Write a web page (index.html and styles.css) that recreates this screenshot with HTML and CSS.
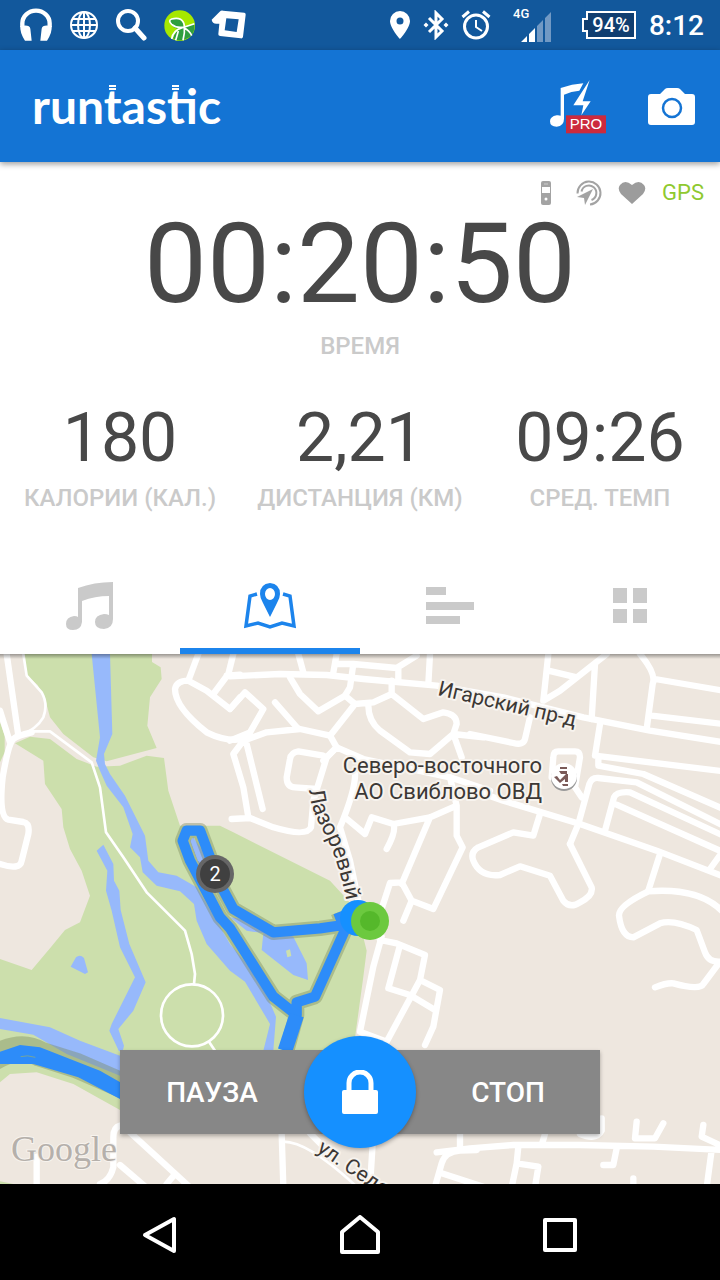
FILE: index.html
```html
<!DOCTYPE html>
<html lang="ru">
    <head>
        <meta charset="UTF-8">
        <meta name="viewport" content="width=device-width, initial-scale=1.0">
        <title>runtastic</title>
        <link rel="stylesheet" href="styles.css">
    </head>
    <body>
        <div class="status">
            <div class="status-left">
                <svg width="34" height="34" viewBox="0 0 102 102" aria-hidden="true">
                    <path d="M10 58V46a41 38 0 0 1 82 0v12" fill="none" stroke="#fff" stroke-width="13"/>
                    <path d="M4 54q28-6 30 8l4 36H18q-16-24-14-44zM98 54q-28-6-30 8l-4 36h20q16-24 14-44z" fill="#fff"/>
                </svg>
                <svg width="30" height="30" viewBox="0 0 30 30" fill="none" stroke="#fff" stroke-width="2" aria-hidden="true">
                    <circle cx="15" cy="15" r="13"/>
                    <ellipse cx="15" cy="15" rx="6" ry="13"/>
                    <path d="M15 2v26M2 15h26M4 9h22M4 21h22"/>
                </svg>
                <svg width="32" height="32" viewBox="0 0 32 32" fill="none" stroke="#fff" aria-hidden="true">
                    <circle cx="13" cy="12" r="10" stroke-width="4"/>
                    <path d="M20 19l9 10" stroke-width="5" stroke-linecap="round"/>
                </svg>
                <svg width="32" height="32" viewBox="0 0 96 96" aria-hidden="true">
                    <circle cx="50" cy="50" r="46" fill="#a6e800"/>
                    <path d="M20 34q10-10 28-4 14 8 14 24l32-8q2 26-14 38-30 18-50 4 8-24 24-28-30 0-34-26z" fill="#2f9e3f"/>
                    <path d="M62 54Q40 58 26 46 14 34 26 30q34-8 38 20 2 22-4 44M26 90q4-26 32-34l36-12M62 56q18 8 24 24M46 66l-8 28" fill="none" stroke="#fff" stroke-width="5"/>
                </svg>
                <svg width="36" height="32" viewBox="0 0 108 96" aria-hidden="true">
                    <path fill="#fff" fill-rule="evenodd" d="M2 32L26 8q4-4 10-3l64 6q5 1 4 6l-8 66q-1 6-7 5l-62-7q-6-1-5-6l3-31H16q-12 0-14-12zM46 28l-5 36 36 5 6-38z"/>
                </svg>
            </div>
            <div class="status-right">
                <svg width="22" height="30" viewBox="0 0 22 30" aria-hidden="true">
                    <path fill="#fff" fill-rule="evenodd" d="M11 1a10 10 0 0 1 10 10c0 7-10 18-10 18S1 18 1 11A10 10 0 0 1 11 1zm0 6.500a3.500 3.500 0 1 0 0 7 3.500 3.500 0 0 0 0-7z"/>
                </svg>
                <svg width="26" height="30" viewBox="0 0 26 30" aria-hidden="true">
                    <path d="M6 8l13 13-6 6V3l6 6L6 22" fill="none" stroke="#fff" stroke-width="3"/>
                    <path d="M3 12.500l2.500 2.500L3 17.500.500 15zM23 12.500l2.500 2.500-2.500 2.500-2.500-2.500z" fill="#fff"/>
                </svg>
                <svg width="30" height="30" viewBox="0 0 30 30" fill="none" stroke="#fff" aria-hidden="true">
                    <circle cx="15" cy="16.500" r="11.500" stroke-width="3"/>
                    <path d="M15 10v7l6 4" stroke-width="2"/>
                    <path d="M1.500 7L8 1.500M22 1.500L28.500 7" stroke-width="3"/>
                </svg>
                <svg class="signal" width="40" height="38" viewBox="0 0 40 38" aria-hidden="true">
                    <text x="0" y="12" class="net">4G</text>
                    <path fill="#fff" d="M8 36l6-6v6zM16 28l6-6v14h-6z"/>
                    <path fill="#7199c4" d="M24 20l6-6v22h-6zM32 12l6-6v30h-6z"/>
                </svg>
                <div class="battery">
                    <svg width="56" height="30" viewBox="0 0 56 30" aria-hidden="true">
                        <path fill="#103e70" stroke="#fff" stroke-width="2" d="M6 2h48v26H6v-7H2V9h4z"/>
                        <text x="30" y="22" text-anchor="middle">94%</text>
                    </svg>
                </div>
                <span class="clock">8:12</span>
            </div>
        </div>

        <header class="header">
            <div class="logo">run<span class="t">t</span>as<span class="t">t</span>ic</div>
            <button class="icon-button" aria-label="Музыка PRO">
                <svg width="58" height="56" viewBox="0 0 174 168" aria-hidden="true">
                    <path fill="#fff" d="M32 30q34-12 68-14L88 38q-24 2-46 12v72q0 22-22 24-20 0-20-16 0-14 20-18 6-1 12 1zM119 6L98 70h24l-28 42 6-30H70z"/>
                    <rect x="48" y="112" width="120" height="54" fill="#cc2a3d"/>
                    <text x="108" y="154" text-anchor="middle" class="pro">PRO</text>
                </svg>
            </button>
            <button class="icon-button" aria-label="Камера">
                <svg width="48" height="40" viewBox="0 0 48 40" aria-hidden="true">
                    <path fill="#fff" d="M3 8h9l5-5q1-1 3-1h9q2 0 3 1l5 5h7q3 0 3 3v25q0 3-3 3H3q-3 0-3-3V11q0-3 3-3z"/>
                    <circle cx="24" cy="22" r="9" fill="#fff" stroke="#1474d4" stroke-width="2.500"/>
                </svg>
            </button>
        </header>

        <section class="metrics">
            <div class="sensors">
                <svg width="12" height="26" viewBox="0 0 12 26" aria-hidden="true">
                    <rect x="1" y="1" width="10" height="24" rx="2" fill="#a3a3a3"/>
                    <path fill="#fff" d="M2 7h8v6H2z"/>
                    <circle cx="6" cy="19" r="1.500" fill="#fff"/>
                    <path d="M4 4h4" stroke="#ccc"/>
                </svg>
                <svg width="26" height="26" viewBox="0 0 26 26" fill="none" stroke="#a3a3a3" stroke-width="2" aria-hidden="true">
                    <path d="M1.500 13.500A11.500 11.500 0 1 1 14 24.500"/>
                    <path d="M5.500 11.500A7.500 7.500 0 1 1 15.500 20"/>
                    <path fill="#a3a3a3" stroke="none" d="M17 9L9 25l-1-7-7-1z"/>
                </svg>
                <svg width="28" height="24" viewBox="0 0 28 24" aria-hidden="true">
                    <path fill="#9c9c9c" d="M14 23L3 13Q-1 8 2 4q5-6 12 0 7-6 12 0 3 4-1 9z"/>
                </svg>
                <span class="gps">GPS</span>
            </div>
            <div class="timer">00:20:50</div>
            <div class="label">ВРЕМЯ</div>
            <div class="stats">
                <div>
                    <div class="value">180</div>
                    <div class="label">КАЛОРИИ (КАЛ.)</div>
                </div>
                <div>
                    <div class="value">2,21</div>
                    <div class="label">ДИСТАНЦИЯ (КМ)</div>
                </div>
                <div>
                    <div class="value">09:26</div>
                    <div class="label">СРЕД. ТЕМП</div>
                </div>
            </div>
        </section>

        <nav class="tabs">
            <button aria-label="Музыка">
                <svg width="48" height="50" viewBox="0 0 48 50" aria-hidden="true">
                    <path fill="#cacaca" d="M12 7q16-6 35-6v37q0 9-9 10-9 0-9-7 0-7 9-8 3 0 5 1V15q-14 0-27 5v21q-1 8-9 8-7 0-7-6 0-7 8-8 3 0 4 1z"/>
                </svg>
            </button>
            <button class="active" aria-label="Карта">
                <svg width="54" height="48" viewBox="0 0 54 48" aria-hidden="true">
                    <path fill="none" stroke="#1c84ec" stroke-width="3.500" d="M14 12L7 14 3 44l12-3 12 4 12-4 12 3-4-30-7-2"/>
                    <path fill="#1c84ec" fill-rule="evenodd" d="M27 1q10 1 10 11 0 4-3 9l-7 14-7-14q-3-5-3-9Q17 2 27 1zm0 5a5 6 0 1 0 0 12 5 6 0 0 0 0-12z"/>
                </svg>
            </button>
            <button aria-label="Сплиты">
                <svg width="48" height="38" viewBox="0 0 48 38" aria-hidden="true">
                    <path fill="#cacaca" d="M0 0h20v8H0zM0 15h48v8H0zM0 29h34v8H0z"/>
                </svg>
            </button>
            <button aria-label="Ещё">
                <svg width="36" height="36" viewBox="0 0 36 36" aria-hidden="true">
                    <path fill="#cacaca" d="M1 0h14v15H1zM21 0h14v15H21zM1 21h14v14H1zM21 21h14v14H21z"/>
                </svg>
            </button>
        </nav>

        <main class="map">
            <svg class="map-canvas" viewBox="0 0 720 530" preserveAspectRatio="xMidYMid slice">
                <g transform="scale(.33333)">
                    <!-- parks -->
                    <g fill="#ccdfac">
                        <path d="M72 0L82 65 112 92 134 130 150 190 190 240 280 310 320 322 470 282 442 215 450 130 485 75 482 40 456 24V0z"/>
                        <path d="M45 268L90 248 150 255 230 315 290 338 360 335 440 305 492 312 505 410 540 515 660 515 700 535 990 680 1045 740 1085 830 1100 890 1090 968 1060 1188V1300H360V1368L220 1290 110 1255 30 1260 0 1285V915L95 948 150 883 195 828 240 805 270 725 245 650 210 585 190 520 185 465 135 390 130 320z"/>
                        <path d="M0 205l14 40v50L0 325zM0 1582l40 8H0z"/>
                    </g>
                    <!-- water -->
                    <g fill="#97b9fb">
                        <path d="M275 0H330L337 240 312 300 315 330 330 360 375 425 435 545 445 620 475 655 530 665 590 700 650 800 690 870 740 930 790 1000 828 1088 820 1190H790L810 1110 735 983 690 950 620 870 590 800 582 750 540 712 470 695 428 655 420 610 390 580 398 540 370 460 320 395 300 350 288 320 300 250z"/>
                        <path d="M290 590L310 572 340 630 342 680 358 710 362 768 388 870 437 985 400 1070 355 1125 372 1175 368 1192H357L328 1130 335 1110 405 970 360 880 335 770 318 710 322 650z"/>
                        <path d="M212 938L228 910Q240 900 252 912L264 955 255 960z"/>
                        <path d="M0 1092L150 1120 240 1160 360 1205V1265L200 1200 100 1142 0 1125z"/>
                        <path d="M570 560L580 550 640 640 600 640zM690 790L760 800 880 848 920 928 924 978 880 963 785 888 790 838 740 830z"/>
                    </g>
                    <path fill="#ccdfac" d="M858 890l12-4 4 20-12 4z"/>
                    <!-- footpaths -->
                    <g class="road thin">
                        <path d="M45 245L95 232H150L275 325 300 400 318 535 370 610 440 715 555 830 575 900 585 960 582 990M628 1165L645 1190"/>
                        <circle cx="576" cy="1084" r="93"/>
                        <path d="M70 0L80 65 125 115Q145 150 130 190 110 225 60 245"/>
                    </g>
                    <!-- roads -->
                    <g class="road">
                        <path d="M20 0L55 245M0 170L30 265M95 235Q50 245 40 255 25 270 8 370 -5 490 25 497L70 504Q90 508 85 540L65 620Q60 650 0 630"/>
                        <path d="M595 0L565 80Q530 80 525 105 525 160 620 235 690 270 750 250M700 0L685 60 640 120M680 65L720 62M565 80L620 110 690 165 720 130"/>
                        <path d="M110 1508V1600M360 1415Q340 1420 340 1450V1540Q330 1580 300 1590M390 1435L570 1600M360 1533L450 1610M500 1590L525 1560"/>
                    </g>
                    <g class="road" transform="translate(690 0)">
                        <path d="M0 67L150 60 290 63 400 75 620 95 820 130 1060 190 1260 230 1480 265"/>
                        <path d="M205 0L220 55M180 70L210 120 265 172 345 125 360 100 370 30 500 42 560 5M320 0L310 55M320 30H370M505 42V75M600 0L595 90"/>
                        <path d="M345 125L375 150 430 145 485 120V80M375 150L300 245 320 280 280 320M415 155Q415 200 450 230L540 295 600 300 670 240 695 310M485 120L580 195 640 175Q680 180 680 210L670 240 760 250"/>
                        <path d="M0 165L45 115 100 165 60 235 0 260M135 145L205 225M300 245L210 225 110 235 40 260 10 300 40 400 55 490M50 270L98 465M5 495L60 492 130 520Q230 550 243 520L250 440 290 310 320 280 400 315 660 370 780 410"/>
                        <path d="M280 305L205 292Q183 295 180 315L170 370Q170 400 195 400L260 405M375 350Q380 400 330 520L360 620 385 740 450 855M345 490L405 540 425 490 490 510Q500 530 470 585M490 510L600 490 680 455 660 370M680 455V545L698 580 610 765 545 740 515 685 480 687 450 780M600 490L515 690M545 740L520 800"/>
                    </g>
                    <g class="road" transform="translate(1410 0)">
                        <path d="M235 0L220 140 270 110 410 0M235 50L320 70M375 30L365 195M510 0Q560 60 548 90L530 225M555 75L760 110M545 185L760 210M180 190L165 255Q160 275 130 267L0 240M390 210L375 305 760 352M385 310V335L520 360 760 465"/>
                        <path d="M300 570L325 510 358 390Q365 370 385 372L500 385 760 515M405 530L432 430Q440 412 480 415L760 545M440 452L745 588M720 645L760 590M0 405L100 440 330 510 560 590 760 667"/>
                        <path d="M335 430L315 400 330 310Q330 292 315 292H265Q250 292 250 310L245 370M210 480L190 545 130 535 25 580Q0 595 10 620 30 670 90 663L150 637 240 665 280 740Q300 765 330 745 370 725 365 700L300 570M570 600L535 710"/>
                        <path d="M760 775Q690 700 535 712 445 755 447 785 455 850 490 850L570 808Q610 795 680 828L705 895Q715 925 750 923L700 990Q690 1010 610 988 590 986 555 1000"/>
                        <path d="M-100 1495L0 1483 130 1473H330L550 1478 760 1488M500 1403L495 1453H555L580 1408M700 1413L695 1448 760 1478M395 1393V1430Q380 1460 330 1440M145 1478L140 1528 125 1600M140 1528L205 1538 195 1600M440 1483L430 1533H400M725 1488L710 1600M490 1573V1600M225 1440L215 1473"/>
                    </g>
                    <g class="road" transform="translate(690 738)">
                        <path d="M455 110L430 200 390 395 470 425 570 240 630 270 610 380 585 435M450 120L500 130 585 165 570 240M510 135L475 265 540 285 615 330M155 700L160 860M240 700L300 760M430 700L420 860M690 700V750M615 860L635 790Q645 755 690 752L740 750M635 820L760 860"/>
                        <path class="thin" d="M155 725Q230 720 380 860"/>
                    </g>

                    <!-- track -->
                    <g class="track-edge">
                        <path d="M1030 813L960 823 820 835 700 765 660 690 600 530 560 530 548 560 570 620 660 790 690 823 820 1028 890 1083 890 1045 945 1028 1035 828 1015 775M890 1083L860 1190"/>
                        <path d="M-20 1213Q60 1165 120 1200L230 1235 380 1300"/>
                    </g>
                    <path fill="none" stroke="#97b9fb" stroke-width="12" d="M578 560L600 620"/>
                    <g class="track">
                        <path d="M1030 813L960 823 820 835 700 765 660 690 600 530 560 530 548 560 570 620 660 790 690 823 820 1028 890 1083 890 1045 945 1028 1035 828 1015 775"/>
                        <path class="wide" d="M890 1083L855 1190"/>
                        <path fill="#2d8cf9" stroke="none" d="M0 1193L60 1173 120 1180 300 1250 370 1290V1340L235 1270 100 1230H0z"/>
                    </g>
                    <path d="M62 1208q20-6 44 2" fill="none" stroke="#97b070" stroke-width="2"/>
                </g>

                <!-- street names -->
                <g class="names">
                    <text transform="translate(437 41) rotate(13)" class="street">Игарский пр-д</text>
                    <path id="lazorevy" fill="none" stroke="none" d="M309 136Q311 158 325 180 338 205 347 250"/>
                    <text><textPath href="#lazorevy">Лазоревый</textPath></text>
                    <text transform="translate(316 497) rotate(34)" class="street">ул. Седова</text>
                    <text x="542" y="119" text-anchor="end">Северо-восточного</text>
                    <text x="542" y="145" text-anchor="end">АО Свиблово ОВД</text>
                </g>
                <circle cx="564" cy="124" r="13" fill="#999"/>
                <circle cx="564" cy="122" r="13" fill="#fff"/>
                <path fill="#7a5a58" d="M560 113h7v2h-7zM559 117h8v3h-6zM554 123l3-1 3 4 6-6h2v8h-3v-3l-5 4zM562 130h6v2h-5z"/>

                <!-- markers -->
                <circle cx="215" cy="220" r="19" fill="#666"/>
                <circle cx="215" cy="220" r="15" fill="#404040"/>
                <text x="215" y="227" text-anchor="middle" class="km">2</text>
                <circle cx="358" cy="264" r="18" fill="#1590ff"/>
                <circle cx="370" cy="267" r="19" fill="#6cc93f"/>
                <circle cx="370" cy="267" r="10" fill="#55b82b"/>
                <text x="11" y="507" class="google">Google</text>
            </svg>
            <div class="actions">
                <button>ПАУЗА</button>
                <button class="lock" aria-label="Блокировка">
                    <svg width="36" height="44" viewBox="0 0 36 44" aria-hidden="true">
                        <path fill="none" stroke="#fff" stroke-width="5" d="M7 22V13a11 11 0 0 1 22 0v9"/>
                        <rect y="20" width="36" height="24" rx="2" fill="#fff"/>
                    </svg>
                </button>
                <button>СТОП</button>
            </div>
        </main>

        <nav class="system">
            <button aria-label="Назад">
                <svg width="40" height="40" viewBox="0 0 40 40"><path d="M34 4v32L5 20z"/></svg>
            </button>
            <button aria-label="Домой">
                <svg width="40" height="40" viewBox="0 0 40 40"><path d="M2 37V17L20 2l18 15v20z"/></svg>
            </button>
            <button aria-label="Недавние">
                <svg width="40" height="40" viewBox="0 0 40 40"><path d="M5 5h30v30H5z"/></svg>
            </button>
        </nav>
    </body>
</html>
```
FILE: styles.css
```css
:root {
    --status: #12589c;
    --header: #1474d4;
    --active: #1c84ec;
    --lock:   #1590ff;
    --text:   #484848;
    --label:  #cacaca;
    --gps:    #8fc92f;
    --land:   #eee7df;
    --bar:    #878787;
}
* {
    box-sizing: border-box;
    font-family: Roboto, "Noto Sans", sans-serif;
}
body {
    margin: 0;
    min-height: 100vh;
    display: flex;
    flex-direction: column;
    background: #fff;
}
button {
    border: 0;
    padding: 0;
    background: transparent;
    cursor: pointer;
}
svg {
    display: block;
}

/* Status bar */
.status {
    display: flex;
    justify-content: space-between;
    align-items: center;
    height: 50px;
    padding: 0 16px 0 19px;
    background: var(--status);
    color: #fff;
}
.status-left,
.status-right {
    display: flex;
    align-items: center;
}
.status-left {
    gap: 16px;
}
.status-right {
    gap: 12px;
}
.status text {
    fill: #fff;
    font-weight: 500;
}
.status .net {
    font-size: 13px;
}
.signal {
    margin-left: 10px;
}
.battery {
    margin-left: 16px;
    font-size: 20px;
}
.clock {
    font-size: 28px;
    font-weight: 500;
    line-height: 32px;
    padding-top: 2px;
}

/* Header */
.header {
    display: flex;
    align-items: center;
    height: 112px;
    padding: 0 24px 0 32px;
    background: var(--header);
    box-shadow: 0 2px 6px rgba(0, 0, 0, 0.4);
    position: relative;
}
.logo {
    flex-grow: 1;
    font-family: Lato, sans-serif;
    font-size: 48px;
    font-weight: 700;
    line-height: 52px;
    color: #fff;
}
.logo .t {
    font-family: inherit;
    /* two dashes over the stem */
    background:
        linear-gradient(#fff, #fff) no-repeat 5px 8px / 7px 2px,
        linear-gradient(#fff, #fff) no-repeat 5px 11px / 7px 2px;
}
.icon-button + .icon-button {
    margin-left: 40px;
}
.pro {
    fill: #fff;
    font-family: "Liberation Sans", sans-serif;
    font-size: 45px;
}

/* Metrics */
.metrics {
    padding: 15px 0 44px;
    text-align: center;
}
.sensors {
    display: flex;
    justify-content: flex-end;
    align-items: center;
    gap: 16px;
    height: 31px;
    padding-right: 16px;
}
.sensors svg:first-child {
    margin-right: 8px;
}
.gps {
    color: var(--gps);
    font-size: 22px;
}
.timer {
    font-size: 112px;
    line-height: 112px;
    color: var(--text);
}
.label {
    margin-top: 10px;
    font-size: 24px;
    font-weight: 500;
    line-height: 32px;
    color: var(--label);
}
.stats {
    display: grid;
    grid-template-columns: repeat(3, 1fr);
    margin-top: 42px;
}
.value {
    font-size: 68px;
    line-height: 68px;
    color: var(--text);
}

/* Tabs */
.tabs {
    display: grid;
    grid-template-columns: repeat(4, 1fr);
    height: 96px;
}
.tabs button {
    display: flex;
    justify-content: center;
    align-items: center;
    border-top: 6px solid transparent;
    border-bottom: 6px solid transparent;
}
.tabs .active {
    border-bottom-color: var(--active);
}

/* Map */
.map {
    position: relative;
    flex: 1 0 400px;
    overflow: hidden;
    background: var(--land);
}
.map::before {
    content: "";
    position: absolute;
    z-index: 1;
    top: 0;
    left: 0;
    right: 0;
    height: 5px;
    background: linear-gradient(rgba(0, 0, 0, 0.35), transparent);
}
.map-canvas {
    position: absolute;
    width: 100%;
    height: 100%;
}
.road {
    fill: none;
    stroke: #fff;
    stroke-width: 19px;
    stroke-linecap: round;
    stroke-linejoin: round;
}
.thin {
    stroke-width: 8px;
}
.track,
.track-edge {
    fill: none;
    stroke-linejoin: round;
}
.track {
    stroke: #2d8cf9;
    stroke-width: 31px;
}
.track .wide {
    stroke-width: 44px;
}
.track-edge {
    stroke: rgba(120, 135, 90, 0.4);
    stroke-width: 46px;
}
.track-edge path:last-child {
    stroke-width: 76px;
}
.names {
    font-size: 22px;
    fill: #3c3835;
    stroke: #f7f3ee;
    stroke-width: 4px;
    stroke-linejoin: round;
    paint-order: stroke;
}
.names .street {
    font-size: 21px;
}
.km {
    font-size: 20px;
    fill: #fff;
}
.google {
    font-family: "Liberation Serif", serif;
    font-size: 36px;
    fill: #b5b0ab;
    stroke: #f7f3ee;
    stroke-width: 2px;
    paint-order: stroke;
}
.actions {
    position: absolute;
    left: 120px;
    right: 120px;
    bottom: 50px;
    display: grid;
    grid-template-columns: 1fr 112px 1fr;
    align-items: center;
    height: 84px;
    background: var(--bar);
    box-shadow: 0 2px 4px rgba(0, 0, 0, 0.3);
}
.actions button {
    height: 84px;
    color: #fff;
    font-size: 28px;
    font-weight: 500;
}
.actions .lock {
    display: flex;
    justify-content: center;
    align-items: center;
    height: 112px;
    margin: -14px 0;
    border-radius: 50%;
    background: var(--lock);
    box-shadow: 0 2px 4px rgba(0, 0, 0, 0.3);
}

/* System buttons */
.system {
    display: flex;
    height: 96px;
    padding: 6px 60px 0;
    background: #000;
}
.system button {
    flex: 1;
    display: flex;
    justify-content: center;
    align-items: center;
}
.system path {
    fill: none;
    stroke: #fff;
    stroke-width: 4px;
    stroke-linejoin: round;
}
```
